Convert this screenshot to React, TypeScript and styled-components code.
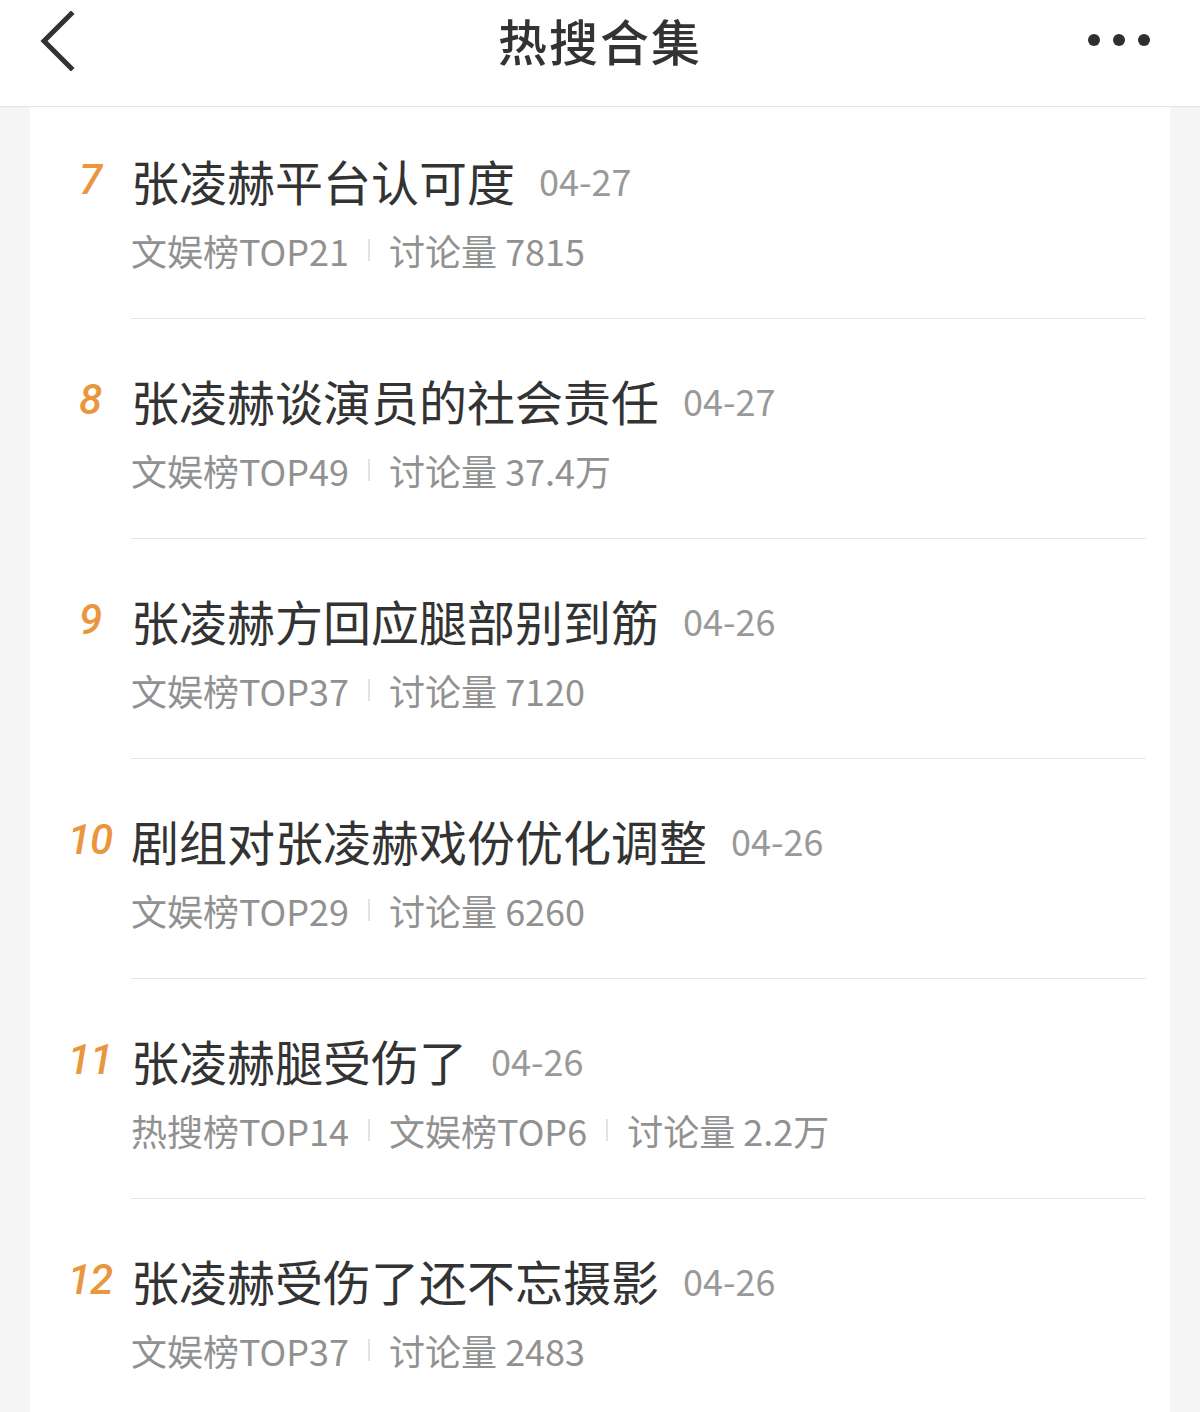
import React from "react";
import styled, { createGlobalStyle } from "styled-components";

interface IHotItem {
  rank: number;
  title: string;
  date: string;
  tags: string[];
}

const items: IHotItem[] = [
  { rank: 7, title: "张凌赫平台认可度", date: "04-27", tags: ["文娱榜TOP21", "讨论量 7815"] },
  { rank: 8, title: "张凌赫谈演员的社会责任", date: "04-27", tags: ["文娱榜TOP49", "讨论量 37.4万"] },
  { rank: 9, title: "张凌赫方回应腿部别到筋", date: "04-26", tags: ["文娱榜TOP37", "讨论量 7120"] },
  { rank: 10, title: "剧组对张凌赫戏份优化调整", date: "04-26", tags: ["文娱榜TOP29", "讨论量 6260"] },
  { rank: 11, title: "张凌赫腿受伤了", date: "04-26", tags: ["热搜榜TOP14", "文娱榜TOP6", "讨论量 2.2万"] },
  { rank: 12, title: "张凌赫受伤了还不忘摄影", date: "04-26", tags: ["文娱榜TOP37", "讨论量 2483"] },
];

const GlobalStyle = createGlobalStyle`
  html, body {
    margin: 0;
    padding: 0;
    background: #f5f5f5;
    font-family: "Noto Sans CJK SC", "Noto Sans", sans-serif;
  }
`;

export default function App() {
  return (
    <Page>
      <GlobalStyle />
      <Header>
        <BackButton>
          <svg width="40" height="60" viewBox="0 0 40 60">
            <polyline
              points="32,3 5,30 32,57"
              fill="none"
              stroke="#333"
              strokeWidth="5"
              strokeLinecap="square"
            />
          </svg>
        </BackButton>
        <HeaderTitle>热搜合集</HeaderTitle>
        <MoreButton>
          <Dot />
          <Dot />
          <Dot />
        </MoreButton>
      </Header>

      <Card>
        {items.map((item, index) => (
          <Row key={item.rank}>
            <Rank isFirst={index === 0}>{item.rank}</Rank>
            <Content isFirst={index === 0}>
              <TitleLine>
                <Title>{item.title}</Title>
                <DateText>{item.date}</DateText>
              </TitleLine>
              <Meta>
                {item.tags.map((tag, i) => (
                  <React.Fragment key={tag}>
                    {i > 0 && <MetaDivider />}
                    <span>{tag}</span>
                  </React.Fragment>
                ))}
              </Meta>
            </Content>
          </Row>
        ))}
      </Card>
    </Page>
  );
}

const Page = styled.div`
  width: 1200px;
  height: 1412px;
  overflow: hidden;
  background: #f5f5f5;
`;

const Header = styled.header`
  height: 107px;
  box-sizing: border-box;
  padding-bottom: 26px;
  background: #fff;
  border-bottom: 1px solid #e4e4e4;
  display: grid;
  grid-template-columns: 1fr auto 1fr;
  align-items: center;
`;

const BackButton = styled.div`
  width: 40px;
  height: 60px;
  margin-left: 39px;
  margin-top: 2px;
  display: flex;
`;

const HeaderTitle = styled.h1`
  margin: 0;
  font-size: 49px;
  font-weight: 500;
  color: #333;
  letter-spacing: 2px;
  line-height: 60px;
`;

const MoreButton = styled.div`
  justify-self: end;
  display: flex;
  gap: 13px;
  margin-right: 50px;
`;

const Dot = styled.span`
  width: 12px;
  height: 12px;
  border-radius: 50%;
  background: #2f2f2f;
`;

const Card = styled.div`
  margin: 0 30px;
  background: #fff;
  height: 1305px;
  overflow: hidden;
`;

const Row = styled.div`
  display: flex;
`;

const Rank = styled.div<{ isFirst: boolean }>`
  width: 101px;
  flex-shrink: 0;
  box-sizing: border-box;
  padding-left: 24px;
  padding-right: 5px;
  padding-top: ${({ isFirst }) => (isFirst ? "42px" : "50px")};
  text-align: center;
  font-family: Roboto, "Noto Sans", sans-serif;
  font-size: 42px;
  font-weight: 500;
  line-height: 62px;
  font-style: italic;
  color: #ea963f;
  letter-spacing: -1px;
`;

const Content = styled.div<{ isFirst: boolean }>`
  flex: 1;
  margin-right: 24px;
  padding-top: ${({ isFirst }) => (isFirst ? "41px" : "49px")};
  padding-bottom: 43px;
  border-bottom: 1px solid #e6e6e6;
`;

const TitleLine = styled.div`
  display: flex;
  align-items: center;
  height: 64px;
`;

const Title = styled.span`
  font-size: 48px;
  line-height: 64px;
  color: #333;
  white-space: nowrap;
`;

const DateText = styled.span`
  margin-left: 24px;
  font-size: 36px;
  line-height: 50px;
  color: #999;
  white-space: nowrap;
`;

const Meta = styled.div`
  display: flex;
  align-items: center;
  margin-top: 13px;
  height: 50px;
  font-size: 36px;
  line-height: 50px;
  color: #919191;
  white-space: nowrap;
`;

const MetaDivider = styled.span`
  width: 2px;
  height: 22px;
  margin: 0 19px;
  background: #e2e2e2;
`;
